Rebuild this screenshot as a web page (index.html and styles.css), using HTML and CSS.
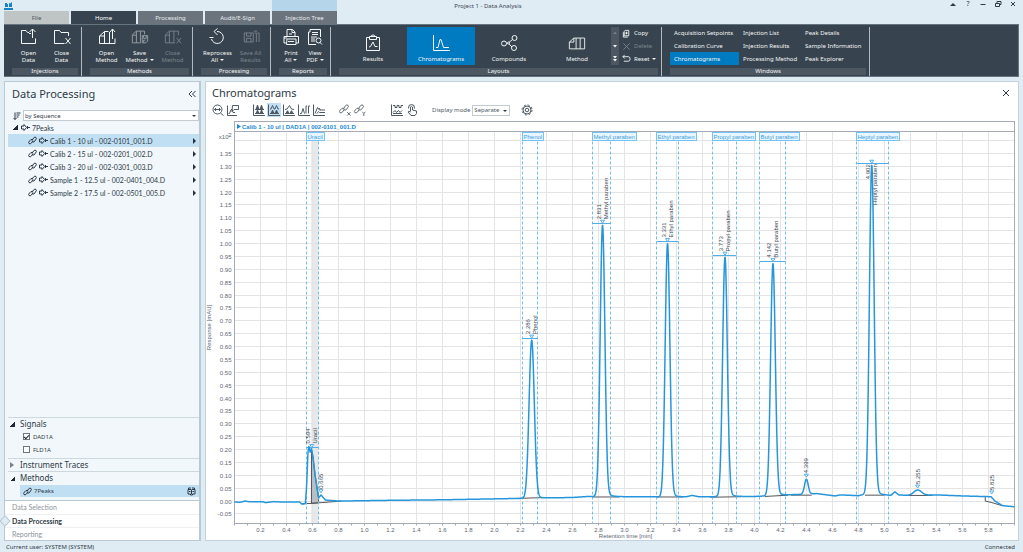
FILE: index.html
```html
<!DOCTYPE html>
<html lang="en">
<head>
  <meta charset="UTF-8" />
  <meta name="viewport" content="width=device-width, initial-scale=1.0" />
  <title>Project 1 - Data Analysis</title>
  <link rel="stylesheet" href="styles.css">
</head>
<body>
  <!-- Shared icons -->
  <svg class="sprite" aria-hidden="true">
    <symbol id="i-folder" viewBox="0 0 18 18"><path d="M9 4.500H7.500L6 2.500H1.500V15.500H15.500V10.500M12.500 10V1M9.500 4l3-3 3 3M9 5.500h2"/></symbol>
    <symbol id="i-folder-x" viewBox="0 0 18 18"><path d="M15.500 8V4.500H8L6.500 2.500H1.500V15.500H11.500M12.500 10l5 6M17.500 10l-5 6"/></symbol>
    <symbol id="i-book" viewBox="0 0 18 18"><path d="M10.500 3.500H6.500L1.500 8V15.500H17V10.500M6.500 3.500V15.500M1.500 8H6.500M11.500 4V15.500M14.500 11V1M12 4l2.500-3L17 4"/></symbol>
    <symbol id="i-book-save" viewBox="0 0 20 18"><path d="M15 6V2.500H6L1.500 6.500V15.500H11M6 2.500V15.500M1.500 7H6M10.500 2.500V15M12.500 7.500h6v6l-2 2h-4zM14 7.500v3h3v-3M14 15v-2.500h2"/></symbol>
    <symbol id="i-book-x" viewBox="0 0 20 18"><path d="M16 7V2.500H6L1.500 6.500V15.500H12M6 2.500V15.500M1.500 7H6M11 2.500V15.500M14 10l5 6M19 10l-5 6"/></symbol>
    <symbol id="i-cycle" viewBox="0 0 18 18"><path d="M8 3.500A6 6 0 1 1 2.500 11M8.500 0.500L5 3.500 8.500 7M0.500 9.500h4"/></symbol>
    <symbol id="i-save-all" viewBox="0 0 20 18"><path d="M2.500 4.500h10v10h-10zM5 4.500v3.500h5V4.500M5 14.500v-4h5v4M14 4.500h2v10M17 4.500h2v10M13 2.500h4"/></symbol>
    <symbol id="i-print" viewBox="0 0 18 18"><path d="M5 8V1.500h5.500L13 4V8M10 1.500V4.500h3M5 10H2V15h2M14 15h2.500V8.500H2V10M5 11h9v5.500H4.500zM6 13.500h6M7 6h3"/></symbol>
    <symbol id="i-pdf" viewBox="0 0 18 18"><path d="M4 4V1.500H14.500V9M4 4H2.500V16.500H10M6 4.500h6M6 6.500h6M5 9h6M5 11h4M5 13h4M16 16.500l-2-2"/><circle cx="12.500" cy="12.500" r="2.500"/></symbol>
    <symbol id="i-clip" viewBox="0 0 18 18"><path d="M5 3.500H2.500V16.500H15.500V3.500H13M5.500 2.500h7v3h-7zM7 2.500a2 1.500 0 0 1 4 0M5 13l1.500-.5L9 8l2 4.500H13.500"/></symbol>
    <symbol id="i-chroma" viewBox="0 0 18 18"><path d="M1.500 1V16.500H18M4 13.500h2L8 5.500h1l2.500 8H17"/></symbol>
    <symbol id="i-share" viewBox="0 0 18 18"><circle cx="4" cy="9.500" r="2.500"/><circle cx="14.500" cy="4" r="2.500"/><circle cx="14" cy="14" r="2.500"/><circle cx="8.500" cy="9" r="1"/><path d="M9 8.500l3.500-3M9 10l3 3M6.500 9.500h1"/></symbol>
    <symbol id="i-method" viewBox="0 0 20 18"><path d="M6.500 3.500h12v12h-17V8zM6.500 3.500V8H1.500M9 3.500v12M13.500 3.500v12"/></symbol>
    <symbol id="i-link" viewBox="0 0 9 9"><path d="M4 4.500L5.500 2Q7 .5 8 1.500T7.500 4L6 6H4.500M5 4.500L3.500 7Q2 8.500 1 7.500T1.500 5L3 3.500H4.500"/></symbol>
    <symbol id="i-vial" viewBox="0 0 9 9"><path d="M.5 3H3V1.500L5.500 4.500 3 7.500V6H.5zM6.500 3v3M6.500 4.500H9"/></symbol>
    <symbol id="i-chain" viewBox="0 0 14 14"><path d="M5 6L7.500 2Q9 .5 10.500 1.500T10 4.500L8 7H6M6.500 5.500L4 9.500Q2.500 11 1 10T1.500 7L3.500 5H5.500"/></symbol>
  </svg>

  <header class="titlebar">
    <svg class="app-logo" viewBox="0 0 9 8"><path class="solid" d="M1 1h2v1h1v3H1zM5 1l1 .5L8 0v5H5zM0 6h9v2H0z"/></svg>
    <nav class="tabs">
      <button class="tab tab-file">File</button>
      <button class="tab tab-active">Home</button>
      <button class="tab">Processing</button>
      <button class="tab">Audit/E-Sign</button>
      <button class="tab tab-context">Injection Tree</button>
    </nav>
    <h1 class="app-title">Project 1 - Data Analysis</h1>
    <div class="window-buttons">
      <button aria-label="Collapse ribbon"><svg viewBox="0 0 8 8"><path class="solid" d="M1 6l3-3 3 3z"/></svg></button>
      <button aria-label="Help">?</button>
      <button aria-label="Minimize"><svg viewBox="0 0 8 8"><path d="M1.500 4.500h5"/></svg></button>
      <button aria-label="Restore"><svg viewBox="0 0 8 8"><path d="M1.500 3.500h4v3h-4zM3 3V1.500h4v3H6"/></svg></button>
      <button aria-label="Close"><svg viewBox="0 0 8 8"><path d="M2 2l4 4M6 2L2 6"/></svg></button>
    </div>
  </header>

  <div class="ribbon">
    <section class="group">
      <div class="group-body">
        <button class="tool"><svg><use href="#i-folder"/></svg>Open<br>Data</button>
        <button class="tool"><svg><use href="#i-folder-x"/></svg>Close<br>Data</button>
      </div>
      <h2>Injections</h2>
    </section>
    <section class="group">
      <div class="group-body">
        <button class="tool"><svg><use href="#i-book"/></svg>Open<br>Method</button>
        <button class="tool tool-dim"><svg><use href="#i-book-save"/></svg>Save<br><span class="drop">Method</span></button>
        <button class="tool" disabled><svg><use href="#i-book-x"/></svg>Close<br>Method</button>
      </div>
      <h2>Methods</h2>
    </section>
    <section class="group">
      <div class="group-body">
        <button class="tool"><svg><use href="#i-cycle"/></svg>Reprocess<br><span class="drop">All</span></button>
        <button class="tool" disabled><svg><use href="#i-save-all"/></svg>Save All<br>Results</button>
      </div>
      <h2>Processing</h2>
    </section>
    <section class="group">
      <div class="group-body">
        <button class="tool tool-narrow"><svg><use href="#i-print"/></svg>Print<br><span class="drop">All</span></button>
        <button class="tool tool-narrow"><svg><use href="#i-pdf"/></svg>View<br><span class="drop">PDF</span></button>
      </div>
      <h2>Reports</h2>
    </section>
    <section class="group">
      <div class="group-body">
        <button class="layout"><svg><use href="#i-clip"/></svg>Results</button>
        <button class="layout selected"><svg><use href="#i-chroma"/></svg>Chromatograms</button>
        <button class="layout"><svg><use href="#i-share"/></svg>Compounds</button>
        <button class="layout"><svg><use href="#i-method"/></svg>Method</button>
        <div class="scroller">
          <button aria-label="Scroll up" disabled><svg viewBox="0 0 6 6"><path class="solid" d="M1 4l2-2 2 2z"/></svg></button>
          <button aria-label="Scroll down"><svg viewBox="0 0 6 6"><path class="solid" d="M1 2h4L3 4.500z"/></svg></button>
          <button aria-label="More layouts"><svg viewBox="0 0 6 6"><path class="solid" d="M1 0h4L3 2.500zM1 3h4L3 5.500z"/></svg></button>
        </div>
        <div class="commands">
          <button><svg viewBox="0 0 10 10"><path d="M3.500 1.500h4v6h-5v-5zM1.500 3.500v5.500h5M5 3v3M3.500 4.500h3"/></svg>Copy</button>
          <button disabled><svg viewBox="0 0 10 10"><path d="M1.500 1.500l7 7M8.500 1.500l-7 7"/></svg>Delete</button>
          <button><svg viewBox="0 0 10 10"><path d="M3 1L1 3l2 2M1 3h6q2 0 2 2.500T7 8H2"/></svg><span class="drop">Reset</span></button>
        </div>
      </div>
      <h2>Layouts</h2>
    </section>
    <section class="group">
      <div class="group-body windows">
        <button>Acquisition Setpoints</button><button>Injection List</button><button>Peak Details</button>
        <button>Calibration Curve</button><button>Injection Results</button><button>Sample Information</button>
        <button class="selected">Chromatograms</button><button>Processing Method</button><button>Peak Explorer</button>
      </div>
      <h2>Windows</h2>
    </section>
  </div>

  <main class="workspace">
    <aside class="sidebar">
      <div class="sidebar-head">
        <h2>Data Processing</h2>
        <button aria-label="Collapse panel"><svg viewBox="0 0 8 8"><path d="M4 1L1 4l3 3M7.500 1l-3 3 3 3"/></svg></button>
      </div>
      <div class="sort-row">
        <label for="sort" aria-label="Sort"><svg viewBox="0 0 8 8"><path d="M2 .5v7M.5 6L2 7.500 3.500 6M3.500 1h4M3.500 3h3M3.500 5h2"/></svg></label>
        <span class="select select-wide"><select id="sort"><option>by Sequence</option></select></span>
      </div>
      <ul class="tree">
        <li class="root"><i class="open"></i><svg><use href="#i-vial"/></svg>7Peaks</li>
        <li class="selected"><svg><use href="#i-link"/></svg><svg><use href="#i-vial"/></svg>Calib 1 - 10 ul - 002-0101_001.D<b></b></li>
        <li><svg><use href="#i-link"/></svg><svg><use href="#i-vial"/></svg>Calib 2 - 15 ul - 002-0201_002.D<b></b></li>
        <li><svg><use href="#i-link"/></svg><svg><use href="#i-vial"/></svg>Calib 3 - 20 ul - 002-0301_003.D<b></b></li>
        <li><svg><use href="#i-link"/></svg><svg><use href="#i-vial"/></svg>Sample 1 - 12.5 ul - 002-0401_004.D<b></b></li>
        <li><svg><use href="#i-link"/></svg><svg><use href="#i-vial"/></svg>Sample 2 - 17.5 ul - 002-0501_005.D<b></b></li>
      </ul>
      <section class="fold">
        <button class="fold-head"><i class="open"></i>Signals</button>
        <label class="signal"><input type="checkbox" checked>DAD1A</label>
        <label class="signal"><input type="checkbox">FLD1A</label>
      </section>
      <section class="fold">
        <button class="fold-head"><i class="closed"></i>Instrument Traces</button>
      </section>
      <section class="fold">
        <button class="fold-head"><i class="open"></i>Methods</button>
        <div class="method"><svg><use href="#i-link"/></svg>7Peaks
          <svg class="method-book" viewBox="0 0 9 9"><path d="M1 2.500h3l.5.500.5-.500h3v4.500H5.500v1h-2v-1H1zM4.500 3v4M2 4.500h1.500M5.500 4.500H7M1.500 2V1H4M5 1h2.500v1"/></svg>
        </div>
      </section>
      <nav class="stages">
        <a href="#">Data Selection</a>
        <a href="#" class="current">Data Processing</a>
        <a href="#">Reporting</a>
      </nav>
    </aside>

    <section class="viewer">
      <div class="viewer-head">
        <h2>Chromatograms</h2>
        <button aria-label="Close"><svg viewBox="0 0 8 8"><path d="M1 1l6 6M7 1L1 7"/></svg></button>
      </div>
      <div class="toolbar">
        <button aria-label="Zoom out"><svg viewBox="0 0 12 12"><circle cx="5.500" cy="5.500" r="4.500"/><path d="M2.500 5.500h6M4 4L2.500 5.500 4 7M7 4l1.500 1.500L7 7M8.500 9l3 2.500"/></svg></button>
        <button aria-label="Annotate"><svg viewBox="0 0 12 12"><path d="M.5 1.500V11.500H10M1.500 9.500h1l1.500-4h1l1 3h2M5.500 1.500h6v4H7L5 7.500z"/></svg></button>
        <span class="gap"></span>
        <button aria-label="Separate view"><svg viewBox="0 0 12 12"><path d="M.5 .5V11.500h11.500M2 5.500h9M2 9.500h9"/><path class="solid" d="M2.500 5.500L4 1h1l1.500 4.500zM6.500 5.500L8 1h1l1.500 4.500zM2.500 9.500L4 6h1l1.500 3.500zM6.500 9.500L8 6h1l1.500 3.500z"/></svg></button>
        <button class="pressed" aria-label="Scaled view"><svg viewBox="0 0 12 12"><path d="M.5 .5V11.500h11.500M2 9.500h9M2 5h1L4.500 1.500 6 5h1l1.500-3.500L10 5h1"/><path class="solid" d="M2.500 9.500L4 6h1l1.500 3.500zM6.500 9.500L8 6h1l1.500 3.500z"/></svg></button>
        <button aria-label="Overlaid view"><svg viewBox="0 0 12 12"><path d="M.5 .5V11.500h11.500M2 5.500l2-.5L6.500 1.500 8.500 5l2.500.5M2 9.500h9"/><path class="solid" d="M2.500 9.500L4 6.500h1l1.500 3zM6.500 9.500L8 6.500h1l1.500 3z"/></svg></button>
        <button aria-label="Baselines"><svg viewBox="0 0 12 12"><path d="M.5 .5V11.500h11.500M2 9.500h1.500l1.500-5 1.500 5M8 9.500V2M8 2h1M10.500 9.500V2H12"/></svg></button>
        <button aria-label="Stacked"><svg viewBox="0 0 12 12"><path d="M.5 .5V11.500h11.500M2 9.500L4.500 3.500 6.500 6H12M4 9.500l1.500-2 1 1H12M6 4l1.500 2"/></svg></button>
        <span class="gap"></span>
        <button aria-label="Link X axis"><svg viewBox="0 0 14 14"><use href="#i-chain"/><path d="M9.500 9.500l4 4M13.500 9.500l-4 4"/></svg></button>
        <button aria-label="Link Y axis"><svg viewBox="0 0 14 14"><use href="#i-chain"/><path d="M9.500 9l2 2 2-2M11.500 11v3"/></svg></button>
        <span class="gap gap-wide"></span>
        <button aria-label="Annotations"><svg viewBox="0 0 12 12"><path d="M.5 .5V11.500h11.500M2 1.500h2v2h2v-2h2v2h2v-2h2M2 8.500l2-2 1.500 2 2-2 1.500 2 2-2M2 9.500h9"/></svg></button>
        <button aria-label="Manual integration"><svg viewBox="0 0 12 12"><path d="M4.500 7.500V3q1-1.500 2 0v3l4 1v2.500l-1.500 2H5L2 8q0-1.500 2.500 0M2.500 4.500Q2 .5 5.500 .5T8.500 4.500"/></svg></button>
        <label for="mode">Display mode</label>
        <span class="select"><select id="mode"><option>Separate</option></select></span>
        <button class="settings" aria-label="Settings"><svg viewBox="0 0 12 12"><circle cx="6" cy="6" r="4"/><circle cx="6" cy="6" r="1.800"/><circle cx="6" cy="6" r="5" stroke-dasharray="2 1.930"/></svg></button>
      </div>
      <div class="chart"><svg id="chart" role="img" aria-label="Chromatogram"></svg></div>
    </section>
  </main>

  <footer class="statusbar">
    <span>Current user: SYSTEM (SYSTEM)</span>
    <span>Connected</span>
  </footer>

  <script src="chart.js"></script>
</body>
</html>
```

FILE: styles.css
```css
* {
  margin: 0;
  padding: 0;
  box-sizing: border-box;
}

body {
  font-family: "Noto Sans", "Open Sans", sans-serif;
  font-size: 6px;
  line-height: 8px;
  color: #2e3a46;
  background: #e0ecf4;
  min-height: 100vh;
  display: flex;
  flex-direction: column;
}

button,
select,
input {
  font: inherit;
  color: inherit;
  border: 0;
  background: none;
  border-radius: 0;
}

h1,
h2 {
  font-weight: 400;
}

svg {
  display: block;
  fill: none;
  stroke: currentColor;
  stroke-width: 1;
}

.solid {
  fill: currentColor;
  stroke: none;
}

.sprite {
  position: absolute;
  width: 0;
  height: 0;
}

/* Title bar */
.titlebar {
  height: 24px;
  padding: 0 4px;
  display: flex;
  justify-content: space-between;
  position: relative;
}

.app-logo {
  position: absolute;
  left: 4px;
  top: 2px;
  width: 9px;
  height: 8px;
  color: #1683c8;
}

.tabs {
  display: flex;
  gap: 2px;
  align-items: flex-end;
}

.tab {
  width: 65px;
  height: 13px;
  background: #6b747d;
  color: #e8ecef;
}

.tab-file {
  background: #bfc4c5;
  color: #4c565f;
}

.tab-active {
  background: #37434e;
  color: #fff;
}

.tab-context {
  box-shadow: 0 -11px 0 #b4d5ea;
}

.app-title {
  position: absolute;
  left: 0;
  right: 47px;
  top: 2px;
  text-align: center;
  font-size: 6px;
  color: #3c4854;
}

.window-buttons {
  display: flex;
  gap: 7px;
  height: 8px;
  margin-right: 2px;
}

.window-buttons button {
  width: 8px;
  height: 8px;
  font-size: 7px;
}

.window-buttons svg {
  width: 8px;
  height: 8px;
}

/* Ribbon */
.ribbon {
  display: flex;
  margin: 0 4px;
  padding-top: 2px;
  background: #37434e;
  border: 1px solid #647481;
  border-left: 0;
  color: #f4f6f7;
}

.group {
  display: flex;
  flex-direction: column;
  gap: 3px;
  padding: 0 3px 1px 8px;
  border-right: 1px solid #b3b9be;
}

.group h2 {
  font-size: 6px;
  line-height: 7px;
  background: #4c5762;
  text-align: center;
}

.group-body {
  display: flex;
  height: 38px;
}

.group button:disabled {
  color: #7c858d;
}

.tool {
  width: 33px;
  line-height: 7px;
  white-space: nowrap;
  display: block;
}

.tool-narrow {
  width: 24px;
}

.tool svg {
  width: 18px;
  height: 18px;
  margin: 0 auto 4px;
}

.tool-dim svg {
  color: #9aa2a8;
}

.drop::after {
  content: "";
  display: inline-block;
  margin: 0 0 1px 2px;
  border: 2px solid transparent;
  border-top-color: currentColor;
  border-bottom: 0;
}

.layout {
  width: 68px;
}

.layout svg {
  width: 18px;
  height: 18px;
  margin: 4px auto 3px;
}

.selected {
  background: #007ac0;
}

.scroller {
  display: flex;
  flex-direction: column;
  width: 8px;
  background: #4c5762;
}

.scroller button {
  flex: 1;
}

.scroller svg {
  width: 6px;
  height: 6px;
  margin: 0 auto;
}

.commands {
  display: flex;
  flex-direction: column;
  width: 39px;
  padding-left: 3px;
}

.commands button {
  flex: 1;
  display: flex;
  align-items: center;
  gap: 3px;
  white-space: nowrap;
}

.commands svg {
  width: 9px;
  height: 9px;
}

.group-body.windows {
  display: grid;
  grid-template-columns: 69px 62px 65px;
  grid-template-rows: repeat(3, 1fr);
}

.windows button {
  text-align: left;
  padding-left: 4px;
  white-space: nowrap;
}

/* Workspace */
.workspace {
  flex: 1;
  display: flex;
  gap: 4px;
  margin: 4px 4px 0;
}

.sidebar {
  width: 197px;
  flex: none;
  display: flex;
  flex-direction: column;
  background: #f1f7fb;
  border: 1px solid #b9c9d4;
  border-right-width: 2px;
}

.sidebar-head {
  display: flex;
  justify-content: space-between;
  align-items: center;
  padding: 4px 3px 0 7px;
}

.sidebar-head h2,
.viewer-head h2 {
  font-size: 11px;
  line-height: 16px;
}

.sidebar-head svg {
  width: 8px;
  height: 8px;
}

.sort-row {
  display: flex;
  align-items: center;
  gap: 2px;
  padding: 8px 0 0 8px;
}

.sort-row label svg {
  width: 8px;
  height: 8px;
}

.select {
  position: relative;
  display: block;
}

.select::after {
  content: "";
  position: absolute;
  right: 3px;
  top: 5px;
  border: 2px solid transparent;
  border-top-color: #2e3a46;
  border-bottom: 0;
  pointer-events: none;
}

.select select {
  appearance: none;
  display: block;
  width: 38px;
  height: 11px;
  padding: 0 1px;
  background: #fff;
  border: 1px solid #c3ccd3;
}

.select-wide {
  flex: 1;
}

.select-wide select {
  width: 100%;
}

.tree {
  flex: 1;
  list-style: none;
  padding-left: 3px;
}

.tree li {
  display: flex;
  align-items: center;
  gap: 2px;
  height: 13px;
  padding: 0 3px 0 20px;
  white-space: nowrap;
}

.tree,
.stages {
  font-family: Lato, "Noto Sans", sans-serif;
  font-size: 7px;
}

.tree .root {
  padding-left: 5px;
}

.tree .root .open {
  margin-right: 1px;
}

.tree svg,
.method svg {
  width: 9px;
  height: 9px;
}

.tree .selected,
.method {
  background: #c0dff3;
}

/* Row marker at the right edge */
.tree b {
  margin-left: auto;
  border: 3px solid transparent;
  border-left-color: #25303a;
  border-right: 0;
}

.open,
.closed {
  display: block;
  width: 5px;
  height: 5px;
}

.open {
  background: linear-gradient(135deg, transparent 50%, #1f2a34 50%);
}

.closed {
  width: 0;
  height: 0;
  margin-right: 1px;
  border: 3px solid transparent;
  border-left: 4px solid #77828c;
  border-right: 0;
}

.fold {
  margin-left: 3px;
  border-top: 1px solid #cdd8df;
}

.fold-head {
  display: flex;
  align-items: center;
  gap: 5px;
  padding-left: 2px;
  font-size: 8px;
  line-height: 12px;
}

.signal {
  display: flex;
  align-items: center;
  gap: 3px;
  height: 13px;
  padding-left: 15px;
}

.signal:last-child {
  margin-bottom: 2px;
}

.signal input {
  appearance: none;
  width: 7px;
  height: 7px;
  border: 1px solid #6c7780;
  background: #fff;
}

.signal input:checked::after {
  content: "";
  display: block;
  width: 4px;
  height: 2px;
  margin-top: 1px;
  border: 1px solid #1f2a34;
  border-top: 0;
  border-right: 0;
  transform: rotate(-45deg);
}

.method {
  display: flex;
  align-items: center;
  gap: 2px;
  height: 12px;
  margin: 1px 0 3px 12px;
  padding: 0 3px;
}

.method .method-book {
  margin-left: auto;
}

.stages {
  background: #fff;
  border-top: 1px solid #b9c9d4;
}

.stages a {
  display: block;
  position: relative;
  padding-left: 7px;
  line-height: 13px;
  color: #8b949b;
  text-decoration: none;
}

.stages a + a {
  border-top: 1px solid #edf1f4;
  line-height: 12px;
}

.stages .current {
  color: #2e3a46;
  font-weight: 700;
}

.stages .current::before {
  content: "";
  position: absolute;
  left: -4px;
  top: 2px;
  width: 6px;
  height: 6px;
  background: #e0ecf4;
  border: 1px solid #b9c9d4;
  transform: rotate(45deg);
}

/* Chromatogram viewer */
.viewer {
  flex: 1;
  min-width: 0;
  display: flex;
  flex-direction: column;
  background: #fff;
  border: 1px solid #c3d1da;
}

.viewer-head {
  display: flex;
  justify-content: space-between;
  align-items: center;
  padding: 3px 8px 0 6px;
}

.viewer-head svg {
  width: 8px;
  height: 8px;
}

.toolbar {
  display: flex;
  align-items: center;
  gap: 1px;
  height: 14px;
  margin: 2px 0 4px 5px;
  color: #4d5963;
}

.toolbar button {
  padding: 1px;
}

.toolbar button svg {
  width: 12px;
  height: 12px;
}

.toolbar .gap {
  width: 10px;
}

.toolbar .gap-wide {
  width: 21px;
}

.toolbar .pressed {
  background: #c0dff3;
}

.toolbar label {
  margin: 0 1px 0 12px;
}

.toolbar .settings {
  margin-left: 9px;
}

.chart {
  flex: 1;
  position: relative;
  min-height: 200px;
}

.chart svg {
  position: absolute;
  width: 100%;
  height: 100%;
  stroke: none;
  font-family: "Liberation Sans", Arial, sans-serif;
  font-size: 6px;
}

.chart text {
  fill: #5b6672;
}

.chart .trace-name {
  fill: #1b8ad3;
  font-weight: 700;
}

.chart .frame {
  fill: none;
  stroke: #a5a9b8;
}

.chart .grid {
  stroke: #e4e4e6;
}

.chart .marker {
  fill: #fff;
  stroke: #52aee6;
}

.chart .window {
  stroke: #6fbff2;
  stroke-dasharray: 3 2;
}

.chart .height {
  stroke: #52aee6;
}

.chart .tag {
  fill: #eaf6fe;
  stroke: #74c3f5;
}

.chart .tag-text {
  fill: #3d9fe0;
}

.chart .peak-text {
  fill: #3c4650;
}

.chart .trace {
  fill: none;
  stroke: #2696dc;
  stroke-width: 1.500;
  stroke-linejoin: round;
}

.chart .base {
  fill: none;
  stroke: #555;
}

.chart .band {
  fill: #e7e8ea;
}

.chart .area {
  fill: #b9bec2;
  stroke: #555;
}

/* Status bar */
.statusbar {
  display: flex;
  justify-content: space-between;
  padding: 2px 8px 1px 6px;
}
```

FILE: chart.js
```js
const svg = document.getElementById('chart');
const margin = { left: 28, right: 3, top: 10, bottom: 17 };
const domain = { x0: 0, x1: 6, y0: -0.087, y1: 1.435 };

// time, height, sigma, name, window start, window end
const peaks = [
  { t: 0.594, h: 0.2, label: '0.594', name: 'Uracil', from: 0.55, to: 0.648 },
  { t: 2.286, h: 0.625, s: 0.02, label: '2.286', name: 'Phenol', from: 2.217, to: 2.333 },
  { t: 2.831, h: 1.071, s: 0.018, label: '2.831', name: 'Methyl paraben', from: 2.751, to: 2.893 },
  { t: 3.331, h: 1.0, s: 0.018, label: '3.331', name: 'Ethyl paraben', from: 3.243, to: 3.412 },
  { t: 3.773, h: 0.947, s: 0.018, label: '3.773', name: 'Propyl paraben', from: 3.677, to: 3.865 },
  { t: 4.142, h: 0.922, s: 0.018, label: '4.142', name: 'Butyl paraben', from: 4.038, to: 4.241 },
  { t: 4.902, h: 1.304, s: 0.018, label: '4.902', name: 'Heptyl paraben', from: 4.787, to: 5.033 },
  { t: 0.665, h: 0.025, label: '0.665' },
  { t: 4.399, h: 0.085, s: 0.014, label: '4.399' },
  { t: 5.255, h: 0.043, s: 0.03, label: '5.255' },
  { t: 5.825, h: 0.02, label: '5.825' }
];

const drift = [
  [0, -0.003], [0.04, -0.005], [0.08, 0], [0.12, -0.003], [0.22, -0.003], [0.24, -0.006],
  [0.3, -0.002], [0.38, -0.004], [0.5, -0.004], [0.52, -0.012], [0.545, -0.01], [0.555, 0.06],
  [0.565, 0.19], [0.572, 0.212], [0.582, 0.19], [0.592, 0.205], [0.604, 0.17], [0.62, 0.1],
  [0.647, 0.012], [0.665, 0.024], [0.7, 0.004], [0.8, 0], [1.2, 0.003], [1.6, 0.005],
  [2.15, 0.01], [2.6, 0.014], [2.72, 0.018], [3, 0.017], [3.47, 0.016], [3.52, 0.022],
  [3.57, 0.017], [4, 0.018], [4.3, 0.025], [4.48, 0.029], [4.62, 0.02], [4.66, 0.024],
  [4.8, 0.021], [4.86, 0.028], [4.96, 0.024], [5.05, 0.022], [5.08, 0.036], [5.11, 0.024],
  [5.18, 0.022], [5.4, 0.024], [5.6, 0.02], [5.82, 0.017], [5.85, 0], [5.91, -0.018], [6, -0.022]
];

// integration baselines, [t, value] pairs
const bases = [
  [[0.52, -0.01], [0.59, -0.009], [0.82, 0]],
  [[2.15, 0.01], [2.4, 0.014]],
  [[2.75, 0.016], [2.96, 0.016]],
  [[3.25, 0.016], [3.45, 0.016]],
  [[3.66, 0.015], [3.9, 0.017]],
  [[4.08, 0.018], [4.26, 0.023]],
  [[4.28, 0.023], [4.44, 0.023]],
  [[4.85, 0.023], [5, 0.023]],
  [[5.18, 0.022], [5.37, 0.022]],
  [[5.775, 0.018], [5.775, 0], [5.82, -0.005], [5.9, -0.017]]
];

function driftAt(t) {
  for (let i = 1; i < drift.length; i++) {
    const [a, ya] = drift[i - 1];
    const [b, yb] = drift[i];
    if (t <= b) return ya + (yb - ya) * (t - a) / (b - a);
  }
  return drift[drift.length - 1][1];
}

function signal(t) {
  let y = driftAt(t);
  peaks.forEach(p => {
    if (!p.s) return;
    const rise = p.h - driftAt(p.t);
    y += rise * Math.exp(-((t - p.t) ** 2) / (2 * p.s ** 2));
    // slight tailing
    const tail = t - p.t;
    if (tail > 0) y += rise * 0.025 * Math.min(1, tail / 0.04) * Math.exp(-tail / 0.035);
  });
  return y;
}

function add(tag, attrs, text) {
  const el = document.createElementNS('http://www.w3.org/2000/svg', tag);
  for (const key in attrs) el.setAttribute(key, attrs[key]);
  if (text !== undefined) el.textContent = text;
  svg.appendChild(el);
  return el;
}

function draw() {
  svg.textContent = '';
  const w = svg.parentNode.clientWidth;
  const h = svg.parentNode.clientHeight;
  const left = margin.left + 0.5;
  const right = w - margin.right - 0.5;
  const top = margin.top + 0.5;
  const bottom = h - margin.bottom + 0.5;
  const x = t => left + (t - domain.x0) / (domain.x1 - domain.x0) * (right - left);
  const y = v => bottom - (v - domain.y0) / (domain.y1 - domain.y0) * (bottom - top);
  const snap = n => Math.floor(n) + 0.5;
  const line = (cls, x1, y1, x2, y2) => add('line', { class: cls, x1, y1, x2, y2 });

  add('rect', { class: 'band', x: x(0.59), y: top, width: x(0.645) - x(0.59), height: bottom - top });

  for (let i = 1; i < 30; i++) {
    const gx = snap(x(i * 0.2));
    line('grid', gx, top, gx, bottom);
    add('text', { x: gx, y: bottom + 8, 'text-anchor': 'middle' }, (i * 0.2).toFixed(1));
  }
  for (let i = -1; i <= 28; i++) {
    const gy = snap(y(i * 0.05));
    line('grid', left, gy, right, gy);
    if (i < 28) add('text', { x: left - 3, y: gy + 2, 'text-anchor': 'end' }, (i * 0.05).toFixed(2));
  }
  for (let i = 0; i <= 60; i++) line('frame', snap(x(i * 0.1)), bottom, snap(x(i * 0.1)), bottom + 2);

  add('rect', { class: 'frame', x: left, y: 0.5, width: right - left, height: bottom - 0.5 });
  line('frame', left, top, right, top);
  add('path', { fill: '#1b8ad3', d: 'M31 3l4 2.500-4 2.500z' });
  add('text', { class: 'trace-name', x: 36, y: 8 }, 'Calib 1 - 10 ul | DAD1A | 002-0101_001.D');
  add('text', { x: left - 6, y: top + 7, 'text-anchor': 'end' }, 'x10');
  add('text', { x: left - 3, y: top + 5, 'text-anchor': 'end' }, '2');
  add('text', { x: (left + right) / 2 + 1, y: bottom + 14, 'text-anchor': 'middle' }, 'Retention time [min]');
  add('text', { transform: `translate(5 ${(top + bottom) / 2}) rotate(-90)`, 'text-anchor': 'middle' }, 'Response [mAU]');

  const area = [[0.592, -0.009], [0.592, 0.2], [0.604, 0.17], [0.62, 0.1], [0.647, 0.01], [0.647, -0.006]];
  add('path', { class: 'area', d: 'M' + area.map(p => `${x(p[0])} ${y(p[1])}`).join('L') + 'z' });

  bases.forEach(b => {
    add('path', { class: 'base', d: 'M' + b.map(p => `${x(p[0])} ${y(p[1])}`).join('L') });
  });

  peaks.filter(p => p.name).forEach(p => {
    const a = snap(x(p.from));
    const b = snap(x(p.to));
    line('window', a, top, a, bottom);
    line('window', b, top, b, bottom);
    line('height', a, snap(y(p.h) - 2), b, snap(y(p.h) - 2));
    const tag = add('text', { class: 'tag-text', x: a + 1, y: top + 7 }, p.name);
    const box = add('rect', { class: 'tag', x: a, y: top + 1, width: Math.ceil(tag.getComputedTextLength()) + 2, height: 8 });
    svg.insertBefore(box, tag);
  });

  let d = '';
  for (let t = 0; t <= 6.0001; t += 0.002) {
    d += (d ? 'L' : 'M') + x(t).toFixed(2) + ' ' + y(signal(t)).toFixed(2);
  }
  add('path', { class: 'trace', d });

  peaks.forEach(p => {
    const px = x(p.t);
    const py = y(p.h) - 1;
    add('path', { class: 'marker', d: `M${px - 2} ${py - 4}h4l-2 3z` });
    // tallest peak has no room above, its labels hang below the bar
    const below = p.h > 1.2;
    const anchor = below ? 'end' : 'start';
    const ty = below ? py : py - 5;
    add('text', { class: 'peak-text', 'text-anchor': anchor, transform: `translate(${p.name ? px - 2 : px + 2} ${ty}) rotate(-90)` }, p.label);
    if (p.name) {
      add('text', { class: 'peak-text', 'text-anchor': anchor, transform: `translate(${px + 5} ${ty}) rotate(-90)` }, p.name);
    }
  });
}

draw();
window.addEventListener('resize', draw);
```
